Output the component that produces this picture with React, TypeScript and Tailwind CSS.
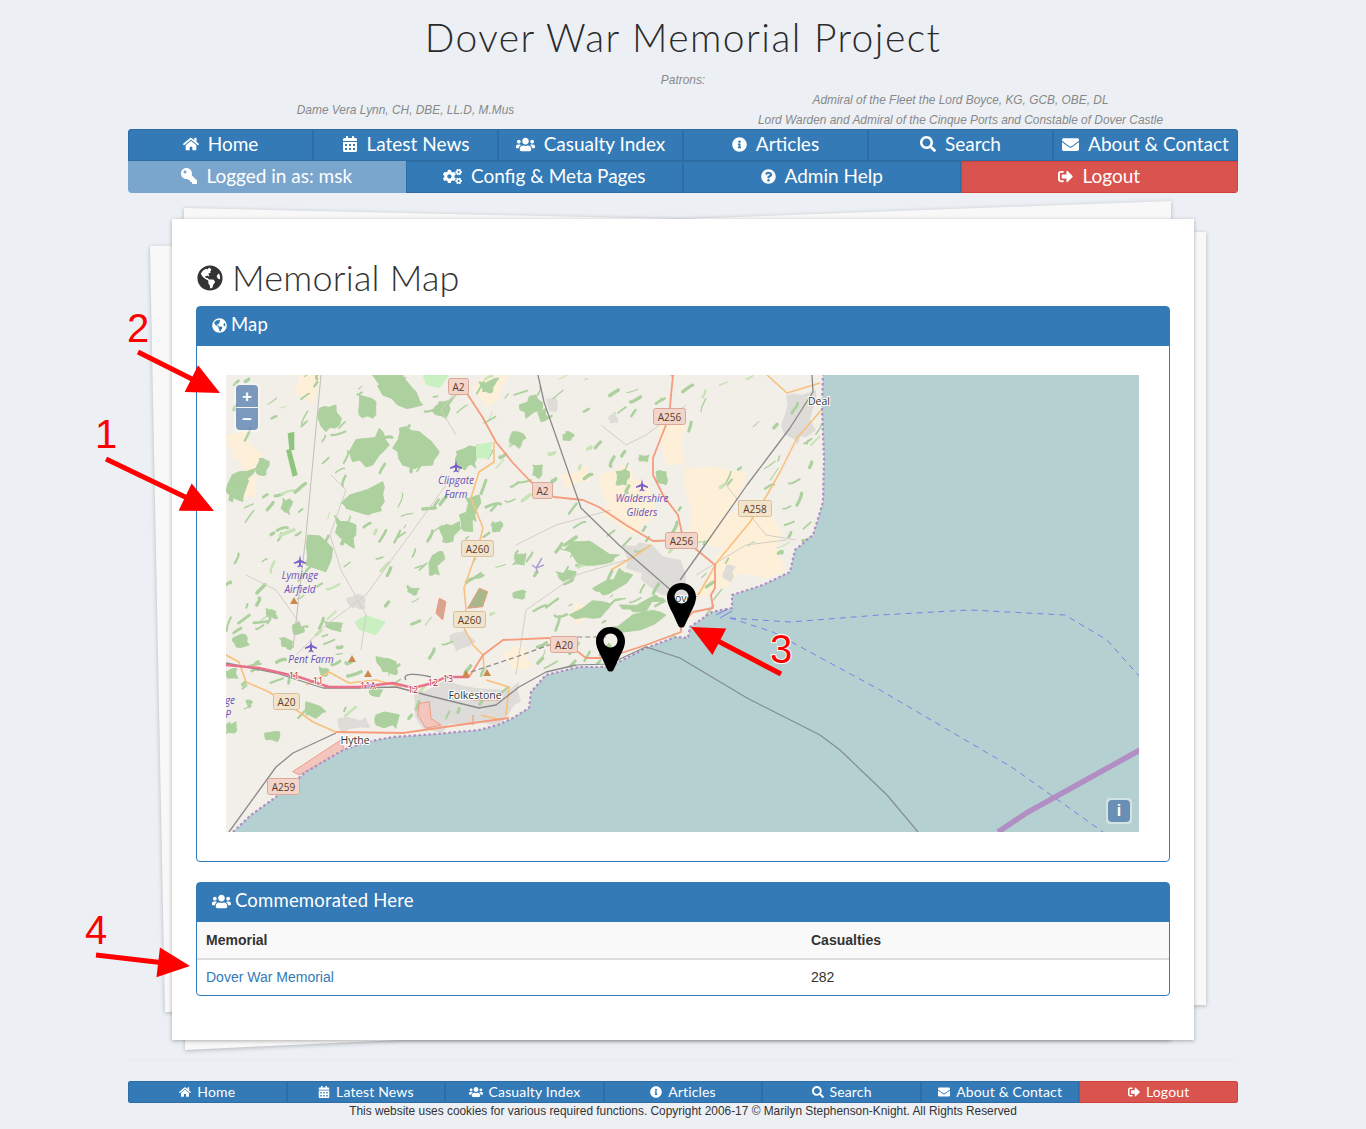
import React from "react";
import {
  FaHome,
  FaCalendarAlt,
  FaUsers,
  FaInfoCircle,
  FaSearch,
  FaEnvelope,
  FaKey,
  FaCogs,
  FaQuestionCircle,
  FaSignOutAlt,
  FaGlobeAmericas,
} from "react-icons/fa";

const round = "font-['Lato',sans-serif]";

const topNav = [
  { label: "Home", icon: FaHome, size: "text-[16px]" },
  { label: "Latest News", icon: FaCalendarAlt, size: "text-[16px]" },
  { label: "Casualty Index", icon: FaUsers, size: "text-[19px]" },
  { label: "Articles", icon: FaInfoCircle, size: "text-[15px]" },
  { label: "Search", icon: FaSearch, size: "text-[16px]" },
  { label: "About & Contact", icon: FaEnvelope, size: "text-[17px]" },
];

// land outline, map pixels
const coast =
  "M7 457 L25 440 L50 422 L80 397 L117 375 L140 367 L167 362 L210 359 L253 355 L272 350 L287 343 L303 333 L305 317 L320 300 L353 292 L383 292 L420 273 L450 262 L462 263 L464 252 L486 237 L506 233 L506 220 L537 210 L564 197 L569 175 L587 160 L597 127 L598 83 L596 33 L597 0";

// everything below is in 3x map pixels, the scale the shapes were read at
const greens = [
  "280,100 330,90 340,150 300,170 280,140",
  "440,0 530,0 570,50 590,90 540,100 470,60",
  "520,160 580,170 640,230 620,270 530,270 500,220",
  "370,230 460,160 490,210 440,270 380,260",
  "350,380 470,320 475,380 430,420 360,400",
  "245,480 320,520 300,590 240,570",
  "325,420 390,450 385,520 345,490",
  "400,60 450,80 440,130 400,120",
  "30,320 60,300 50,380 25,370",
  "0,350 40,290 90,280 60,320 20,380",
  "100,250 130,260 120,300 90,290",
  "170,370 200,380 190,420 165,400",
  "450,845 510,860 510,900 470,890",
  "545,630 580,640 570,660 545,650",
  "290,735 350,745 345,770 300,755",
  "640,80 690,60 660,130 620,110",
  "690,230 760,220 750,280 690,270",
  "860,170 900,190 880,220 850,200",
  "920,270 950,270 940,310 920,300",
  "1170,290 1210,290 1200,330 1170,330",
  "1290,290 1320,290 1320,330 1290,320",
  "1000,520 1070,500 1180,540 1160,560 1080,570",
  "1100,640 1180,580 1220,600 1130,660",
  "1030,720 1130,680 1200,670 1100,730",
  "1130,760 1260,710 1320,720 1200,770",
  "1180,690 1290,660 1320,680 1220,710",
  "990,590 1050,590 1040,620 1000,610",
  "720,370 760,360 750,440 720,420",
  "240,980 300,1010 270,1030 240,1020",
  "450,1020 520,1020 510,1060 450,1050",
  "115,1075 160,1070 155,1100 120,1095",
  "0,1050 30,1040 25,1075 0,1075",
  "120,700 150,710 155,730 125,725",
  "160,790 200,800 195,825 170,815",
  "280,875 310,885 300,905 285,900",
  "430,935 470,945 460,965 435,960",
  "620,540 650,530 640,600 610,600",
  "640,460 700,440 680,500 650,500",
  "700,420 750,410 740,470 705,460",
  "870,540 900,535 895,570 860,570",
  "860,655 900,650 895,670 865,670",
  "800,440 830,445 820,470 800,470",
  "1010,180 1040,175 1035,195 1010,195",
  "1240,240 1270,240 1265,260 1240,258",
  "1020,170 1045,180 1030,190",
  "760,20 820,10 800,50 770,50",
  "880,90 930,60 950,100 900,130",
  "935,110 960,100 970,130 945,140",
  "200,750 220,740 235,770 205,780",
  "20,790 60,780 70,810 30,815",
  "0,890 30,880 35,910 5,910",
  "60,975 80,980 70,1000",
];

const lightGreens = [
  "590,0 670,0 640,40 600,30",
  "750,210 800,200 790,250 750,250",
  "385,740 420,720 480,740 450,780 400,765",
];

const darkGreens = ["180,225 195,222 215,300 200,305", "185,175 205,170 205,225 190,225"];

const peach = [
  "0,180 60,170 110,230 70,290 20,250",
  "220,0 280,0 260,90 210,60",
  "780,100 850,0 780,0 740,40",
  "40,310 100,300 90,370 50,370",
  "1000,300 1080,270 1090,320 1020,350",
  "1120,300 1190,270 1260,320 1290,420 1220,480 1130,420",
  "1030,720 1060,680 1090,720 1060,760",
  "830,830 890,810 920,870 860,880",
  "1290,130 1340,100 1380,160 1380,300 1310,240",
  "1380,280 1560,290 1500,420 1620,390 1680,590 1500,640 1410,660 1500,510 1380,510",
];

const towns = [
  "570,945 700,930 880,920 885,980 830,1040 740,1050 590,1060 565,1000",
  "1190,510 1280,510 1380,600 1380,680 1290,650 1200,580",
  "335,1030 420,1025 430,1060 350,1075",
  "360,670 410,660 420,700 380,700",
  "670,780 720,760 750,800 690,830",
  "1150,120 1170,110 1175,145 1150,145",
  "960,70 990,70 990,110 970,110",
  "1680,60 1770,45 1770,165 1716,210 1665,150",
  "1500,570 1530,575 1515,620 1490,610",
  "1800,750 1830,750 1810,800",
];

let seed = 73;
function next() {
  seed = (seed * 1103515245 + 12345) % 2147483648;
  return seed / 2147483648;
}

// breaks each edge up with some jitter, so woods and towns get a ragged outline
function rough(points: string) {
  const pts = points.split(" ").map((p) => p.split(",").map(Number));
  const out: string[] = [];
  pts.forEach((a, i) => {
    const b = pts[(i + 1) % pts.length];
    const len = Math.hypot(b[0] - a[0], b[1] - a[1]);
    for (let k = 0; k < 3; k++) {
      const t = k / 3;
      const j = k === 0 ? 0 : len * 0.16;
      out.push(
        `${a[0] + (b[0] - a[0]) * t + (next() - 0.5) * 2 * j},${a[1] + (b[1] - a[1]) * t + (next() - 0.5) * 2 * j}`
      );
    }
  });
  return out.join(" ");
}

const greenShapes = greens.map(rough);
const peachShapes = peach.map(rough);
const townShapes = towns.map(rough);

const flecks = (() => {
  const out: { d: string; w: number; c: string }[] = [];
  for (let i = 0; i < 320; i++) {
    const x = next() * 590;
    const y = next() * 345;
    const l = 3 + next() * 12;
    const a = (-75 + next() * 70) * (Math.PI / 180);
    const bend = -4 + next() * 8;
    const dx = Math.cos(a) * l;
    const dy = Math.sin(a) * l;
    out.push({
      d: `M${x} ${y}q${dx / 2 + bend} ${dy / 2 - bend} ${dx} ${dy}`,
      w: 1 + next() * 2.6,
      c: next() > 0.15 ? "#add19e" : "#c8e3b6",
    });
  }
  return out;
})();

const shields: [string, number, number, number, boolean][] = [
  ["A2", 222, 3, 20, true],
  ["A256", 427, 33, 32, true],
  ["A2", 306, 107, 20, true],
  ["A256", 439, 157, 32, true],
  ["A260", 235, 165, 32, false],
  ["A260", 227, 236, 32, false],
  ["A20", 324, 261, 27, true],
  ["A20", 47, 318, 26, false],
  ["A259", 41, 403, 32, true],
  ["A258", 512, 125, 33, false],
];

const planes: [number, number][] = [
  [230, 91],
  [416, 110],
  [74, 186],
  [85, 271],
];

const peaks: [number, number][] = [
  [68, 226],
  [126, 284],
  [142, 299],
  [240, 299],
  [261, 298],
];

const junctions: [string, number, number][] = [
  ["11", 68, 304],
  ["11", 92, 309],
  ["11A", 142, 314],
  ["12", 187, 318],
  ["12", 207, 311],
  ["13", 222, 307],
];

const purpleLabels: [string, number, number][] = [
  ["Clipgate", 230, 109],
  ["Farm", 230, 123],
  ["Waldershire", 416, 127],
  ["Gliders", 416, 141],
  ["Lyminge", 74, 204],
  ["Airfield", 74, 218],
  ["Pent Farm", 85, 288],
  ["ge", 4, 329],
  ["P", 2, 343],
];

const placeLabels: [string, number, number][] = [
  ["Folkestone", 249, 324],
  ["Hythe", 129, 369],
  ["Deal", 593, 30],
  ["Dover", 456, 227],
];

function Pin({ x, y }: { x: number; y: number }) {
  return (
    <path
      transform={`translate(${x} ${y})`}
      fillRule="evenodd"
      d="M14.5 0C6.5 0 0 6 0 14C0 20 3 25 6 31C8 35 10 40 11.5 43C12.5 45 16.5 45 17.5 43C19 40 21 35 23 31C26 25 29 20 29 14C29 6 22.5 0 14.5 0ZM14.5 6.5a7 7 0 1 0 .01 0Z"
    />
  );
}

function MapDrawing() {
  return (
    <svg viewBox="0 0 913 457" className="block h-full w-full">
      <defs>
        <clipPath id="land">
          <path d={`${coast} L0 0 L0 457 Z`} />
        </clipPath>
      </defs>
      <rect width="913" height="457" fill="#b5d0d0" />
      <g clipPath="url(#land)">
        <rect width="913" height="457" fill="#f2efe9" />
        <g transform="scale(0.3333)">
          {peachShapes.map((p, i) => (
            <polygon key={i} points={p} fill="#feefd9" />
          ))}
          {townShapes.map((p, i) => (
            <polygon key={i} points={p} fill="#dedcd8" />
          ))}
        </g>
        <g fill="none" strokeLinecap="round">
          {flecks.map((f, i) => (
            <path key={i} d={f.d} stroke={f.c} strokeWidth={f.w} />
          ))}
        </g>
        <g transform="scale(0.3333)" strokeLinejoin="round">
          {greenShapes.map((p, i) => (
            <polygon key={i} points={p} fill="#add19e" stroke="#add19e" strokeWidth="3" />
          ))}
          {lightGreens.map((p, i) => (
            <polygon key={i} points={p} fill="#c8f0c0" />
          ))}
          {darkGreens.map((p, i) => (
            <polygon key={i} points={p} fill="#8fc57e" />
          ))}
          <polygon points="200,1190 345,1095 355,1125 220,1200" fill="#f3c6bd" stroke="#f09a85" strokeWidth="3" />
          <polygon points="580,985 610,980 615,1030 645,1050 600,1060 575,1020" fill="#f3c6bd" stroke="#f09a85" strokeWidth="3" />
          <polygon points="640,670 660,680 650,735 630,715" fill="#d8a38f" stroke="#f09a85" strokeWidth="3" />
          <polygon points="725,700 760,640 785,650 770,695" fill="#a9b88a" stroke="#e89a85" strokeWidth="3" />
        </g>

        {/* minor roads */}
        <g fill="none" stroke="#d3cec6" strokeWidth="1">
          <path d="M95 0L80 160L67 273" stroke="#c2bfb9" />
          <path d="M105 100L120 115L104 160L115 195L140 240L135 275" />
          <path d="M70 280L100 250L140 220L180 165L220 110" />
          <path d="M375 50L400 70L420 60L460 30" />
          <path d="M290 170L330 150L385 135" />
          <path d="M290 300L300 235L350 200L400 185" />
          <path d="M470 200L520 170L560 165" />
          <path d="M500 110L540 160L570 165" />
          <path d="M20 200L50 215L75 250" />
          <path d="M230 60L215 35L235 10" />
        </g>

        {/* secondary */}
        <g fill="none" stroke="#f8c07c" strokeWidth="1.6" strokeLinejoin="round">
          <path d="M268 67L268 87L253 97L245 123L257 153L252 173L238 213L240 233L238 253L247 270L257 280L258 293" />
          <path d="M0 280L13 287L20 307L43 317L73 337L87 347L110 357" />
          <path d="M80 310L103 297L123 308L150 305L175 312" />
          <path d="M594 8L561 18L541 0" />
          <path d="M597 33L571 63L554 97L541 120L524 147L491 187L474 217L462 235" />
          <path d="M385 195L410 180L425 170" />
          <path d="M260 305L283 312L280 340M255 340L275 345" />
        </g>

        {/* trunk */}
        <g fill="none" stroke="#f59c7c" strokeWidth="1.8" strokeLinejoin="round">
          <path d="M240 17L257 43L270 67L287 88L305 107L328 122L357 125L373 132L400 150L427 166L457 165L471 175L489 190L489 213L485 220L487 233L467 237L455 250" />
          <path d="M447 0L443 42L427 83L427 100L437 120L452 140L457 163" />
          <path d="M243 302L257 280L277 265L323 263L347 273L360 283L380 283L420 270L447 260L455 257L455 250" />
          <path d="M110 357L177 358L247 348L283 343" />
          <path d="M247 340L247 350M247 325L275 325" strokeWidth="1.2" />
        </g>

        {/* rail */}
        <g fill="none" stroke="#8a8a8a" strokeWidth="1.3" strokeLinejoin="round">
          <path d="M0 288L50 298L97 313L133 313L170 312L200 320L253 333L270 330L293 312L320 297L350 290" />
          <path d="M312 0L318 27L355 133L393 170L447 217" />
          <path d="M454 205L474 177L521 110L564 53L587 17L586 0" />
          <path d="M3 457L50 392L67 378L110 358" />
          <path d="M180 305C175 298 190 298 205 302" />
        </g>
        <polyline
          points="245,297 290,282 323,270 350,262 380,262"
          fill="none"
          stroke="#8a8a8a"
          strokeWidth="1.2"
          strokeDasharray="5 3"
        />

        {/* motorway */}
        <path
          d="M0 290L33 293L73 302L103 312L133 312L167 308L187 313L207 308L220 302L243 302"
          fill="none"
          stroke="#e9708a"
          strokeWidth="2.4"
        />
      </g>

      {/* sea lines */}
      <path d={coast} fill="none" stroke="#b18cc9" strokeWidth="2.2" strokeDasharray="2.5 2.5" />
      <path
        d="M350 290L383 289L420 272L454 283L521 323L594 360L614 375L661 420L692 457"
        fill="none"
        stroke="#838d8e"
        strokeWidth="1.2"
      />
      <path d="M772 457L802 437L914 375" fill="none" stroke="#b18fc4" strokeWidth="5.5" />
      <g fill="none" stroke="#7c80e6" strokeWidth="1" strokeDasharray="6 5">
        <path d="M504 243L564 247L654 240L744 235L839 240L881 265L914 302" />
        <path d="M504 243L547 257L654 315L787 393L877 457" />
      </g>
      <path d="M490 240L502 234M494 243L506 236" stroke="#7c80e6" strokeWidth="1" />

      {/* map symbols */}
      {peaks.map(([x, y], i) => (
        <polygon key={i} points={`${x - 4},${y + 3} ${x},${y - 4} ${x + 4},${y + 3}`} fill="#c98a4b" />
      ))}
      {planes.map(([x, y], i) => (
        <path
          key={i}
          transform={`translate(${x} ${y})`}
          d="M0-6L1-1L6 1.5L6 3L1 1.5L1 4L2.5 5.5L2.5 6.5L0 5.5L-2.5 6.5L-2.5 5.5L-1 4L-1 1.5L-6 3L-6 1.5L-1-1Z"
          fill="#7b5fc9"
        />
      ))}
      <path d="M310 193L316 183M310 193L306 190M310 193L312 198M310 193L318 190" stroke="#a9a3d6" strokeWidth="1.5" />

      <g fontFamily="'Open Sans','Noto Sans',sans-serif">
        {purpleLabels.map(([t, x, y], i) => (
          <text key={i} x={x} y={y} textAnchor="middle" fontSize="10" fontStyle="italic" fill="#6a4fb8">
            {t}
          </text>
        ))}
        {junctions.map(([t, x, y], i) => (
          <text
            key={i}
            x={x}
            y={y}
            textAnchor="middle"
            fontSize="9"
            fill="#a8223e"
            stroke="#ffffff"
            strokeWidth="1.5"
            paintOrder="stroke"
          >
            {t}
          </text>
        ))}
        {placeLabels.map(([t, x, y], i) => (
          <text
            key={i}
            x={x}
            y={y}
            textAnchor="middle"
            fontSize="10.5"
            fill="#333333"
            stroke="#ffffff"
            strokeWidth="2"
            paintOrder="stroke"
          >
            {t}
          </text>
        ))}
        {shields.map(([t, x, y, w, pink], i) => (
          <g key={i}>
            <rect
              x={x + 0.5}
              y={y + 0.5}
              width={w}
              height={16}
              rx={2}
              fill={pink ? "#f2d4c9" : "#f2e3cb"}
              stroke={pink ? "#dba898" : "#d9c09c"}
            />
            <text x={x + w / 2 + 0.5} y={y + 12.5} textAnchor="middle" fontSize="10" fill="#5c3a2a">
              {t}
            </text>
          </g>
        ))}
      </g>

      <Pin x={370} y={252} />
      <Pin x={441} y={208} />
    </svg>
  );
}

const arrows: [number, number, number, number][] = [
  [106, 459, 214, 511],
  [138, 352, 220, 393],
  [781, 674, 691, 627],
  [96, 955, 190, 966],
];

function arrowPoints([x1, y1, x2, y2]: [number, number, number, number]) {
  const len = Math.hypot(x2 - x1, y2 - y1);
  const ux = (x2 - x1) / len;
  const uy = (y2 - y1) / len;
  const bx = x2 - ux * 32;
  const by = y2 - uy * 32;
  return [
    [x1 - uy * 2.5, y1 + ux * 2.5],
    [bx - uy * 2.5, by + ux * 2.5],
    [bx - uy * 15, by + ux * 15],
    [x2, y2],
    [bx + uy * 15, by - ux * 15],
    [bx + uy * 2.5, by - ux * 2.5],
    [x1 + uy * 2.5, y1 - ux * 2.5],
  ]
    .map((p) => p.join(","))
    .join(" ");
}

function Annotations() {
  return (
    <svg className="pointer-events-none absolute left-0 top-0 h-[1129px] w-[1366px]" viewBox="0 0 1366 1129">
      {arrows.map((a, i) => (
        <polygon key={i} points={arrowPoints(a)} fill="#fe0000" />
      ))}
      <g fontFamily="'Liberation Sans',Arial,sans-serif" fontSize="40" fill="#fe0000" textAnchor="middle">
        <text x="138" y="342">2</text>
        <text x="106" y="448">1</text>
        <text x="781" y="663" stroke="#ffffff" strokeWidth="2" paintOrder="stroke">3</text>
        <text x="96" y="944">4</text>
      </g>
    </svg>
  );
}

function Panel({
  icon,
  title,
  children,
}: {
  icon: React.ReactNode;
  title: string;
  children: React.ReactNode;
}) {
  return (
    <div className="rounded border border-[#337ab7] bg-white">
      <div
        className={`flex h-[39px] items-center gap-[4px] bg-[#337ab7] pb-[3px] pl-[15px] text-[18.5px] tracking-[0.2px] text-white ${round}`}
      >
        {icon}
        {title}
      </div>
      {children}
    </div>
  );
}

export default function App() {
  return (
    <div className="relative h-[1129px] overflow-hidden bg-[#ecf0f5] font-['Liberation_Sans',Arial,sans-serif] text-[14px] text-[#333]">
      <h1 className={`pt-[12px] pb-[1px] text-center text-[39px] font-light leading-[50px] tracking-[1.45px] text-[#2b2b2b] ${round}`}>
        Dover War Memorial Project
      </h1>

      <div className="mx-auto h-[66px] w-[1110px] text-[11.9px] italic leading-[20px] text-[#888]">
        <div className="pt-[7px] text-center">Patrons:</div>
        <div className="grid grid-cols-2 text-center">
          <div className="pt-[10px]">Dame Vera Lynn, CH, DBE, LL.D, M.Mus</div>
          <div>
            <div>Admiral of the Fleet the Lord Boyce, KG, GCB, OBE, DL</div>
            <div>Lord Warden and Admiral of the Cinque Ports and Constable of Dover Castle</div>
          </div>
        </div>
      </div>

      <nav className={`mx-auto w-[1110px] text-[19px] leading-[24px] text-white ${round}`}>
        <div className="grid h-[32px] grid-cols-6 overflow-hidden rounded-t">
          {topNav.map((item) => (
            <a
              key={item.label}
              className="flex items-center justify-center gap-[9px] border border-[#2e6da4] bg-[#337ab7] pb-[2px]"
            >
              <item.icon className={item.size} />
              {item.label}
            </a>
          ))}
        </div>
        <div className="grid h-[32px] grid-cols-4 overflow-hidden rounded-b">
          <a className="flex items-center justify-center gap-[9px] bg-[#7aa5cc] pb-[2px]">
            <FaKey className="-scale-x-100 text-[16px]" />
            Logged in as: msk
          </a>
          <a className="flex items-center justify-center gap-[9px] border border-[#2e6da4] bg-[#337ab7] pb-[2px]">
            <FaCogs className="text-[19px]" />
            Config & Meta Pages
          </a>
          <a className="flex items-center justify-center gap-[9px] border border-[#2e6da4] bg-[#337ab7] pb-[2px]">
            <FaQuestionCircle className="text-[15px]" />
            Admin Help
          </a>
          <a className="flex items-center justify-center gap-[9px] border border-[#d43f3a] bg-[#d9534f] pb-[2px]">
            <FaSignOutAlt className="text-[15px]" />
            Logout
          </a>
        </div>
      </nav>

      <div className="relative mx-auto mt-[26px] h-[821px] w-[1022px]">
        {/* stacked paper sheets behind the card */}
        <div className="absolute left-[-22px] top-[-18px] h-[849px] w-[1056px] drop-shadow-[0_1px_2px_rgba(0,0,0,0.25)]">
          <div className="absolute inset-0 bg-[#f8f8f8] [clip-path:polygon(0px_45px,1056px_31px,1056px_804px,15px_811px)]" />
        </div>
        <div className="absolute left-[-22px] top-[-18px] h-[849px] w-[1056px] drop-shadow-[0_1px_2px_rgba(0,0,0,0.25)]">
          <div className="absolute inset-0 bg-[#f8f8f8] [clip-path:polygon(34px_7px,530px_18px,1021px_0px,1021px_839px,250px_839px,35px_849px)]" />
        </div>

        <div className="relative h-full bg-white px-[24px] shadow-[0_1px_4px_rgba(0,0,0,0.3)]">
          <div className={`flex h-[87px] items-end gap-[9px] pb-[6px] pl-[1px] text-[36px] font-light leading-[46px] tracking-[0.2px] text-[#333] ${round}`}>
            <FaGlobeAmericas className="mb-[9px] text-[26px]" />
            Memorial Map
          </div>

          <Panel icon={<FaGlobeAmericas className="text-[15px]" />} title="Map">
            <div className="py-[29px] pl-[29px]">
              <div className="relative h-[457px] w-[913px]">
                <MapDrawing />
                <div className="absolute left-[8px] top-[8px] flex w-[26px] flex-col rounded bg-white/40 p-[2px]">
                  <button className="flex h-[22px] w-[22px] items-center justify-center rounded-t bg-[#003c88]/50 text-[17px] font-bold leading-none text-white">
                    +
                  </button>
                  <button className="mt-[1px] flex h-[22px] w-[22px] items-center justify-center rounded-b bg-[#003c88]/50 text-[17px] font-bold leading-none text-white">
                    −
                  </button>
                </div>
                <div className="absolute right-[7px] top-[423px] rounded bg-white/40 p-[2px]">
                  <button className="flex h-[22px] w-[22px] items-center justify-center rounded bg-[#003c88]/50 text-[16px] font-bold leading-none text-white">
                    i
                  </button>
                </div>
              </div>
            </div>
          </Panel>

          <div className="mt-[20px]">
            <Panel icon={<FaUsers className="text-[19px]" />} title="Commemorated Here">
              <table className="w-full overflow-hidden rounded-b text-left">
                <thead>
                  <tr className="h-[37px] border-b-2 border-[#ddd] bg-[#f9f9f9]">
                    <th className="w-[605px] pl-[9px] font-bold">Memorial</th>
                    <th className="pl-[9px] font-bold">Casualties</th>
                  </tr>
                </thead>
                <tbody>
                  <tr className="h-[36px]">
                    <td className="pl-[9px] text-[#337ab7]">Dover War Memorial</td>
                    <td className="pl-[9px]">282</td>
                  </tr>
                </tbody>
              </table>
            </Panel>
          </div>
        </div>
      </div>

      <div className="mx-auto mt-[20px] w-[1110px] border-t border-[#e8ebf0]" />

      <footer className="mx-auto mt-[20px] w-[1110px]">
        <div className={`grid h-[22px] grid-cols-7 overflow-hidden rounded-[3px] text-[14px] leading-[16px] tracking-[0.15px] text-white ${round}`}>
          {topNav.map((item) => (
            <a
              key={item.label}
              className="flex items-center justify-center gap-[6px] border border-[#2e6da4] bg-[#337ab7] pb-[1px]"
            >
              <item.icon className={item.label === "Casualty Index" ? "text-[14px]" : "text-[12px]"} />
              {item.label}
            </a>
          ))}
          <a className="flex items-center justify-center gap-[6px] border border-[#d43f3a] bg-[#d9534f] pb-[1px]">
            <FaSignOutAlt className="text-[12px]" />
            Logout
          </a>
        </div>
        <p className="text-center text-[11.9px] leading-[17px]">
          This website uses cookies for various required functions. Copyright 2006-17 © Marilyn Stephenson-Knight. All
          Rights Reserved
        </p>
      </footer>

      <Annotations />
    </div>
  );
}
